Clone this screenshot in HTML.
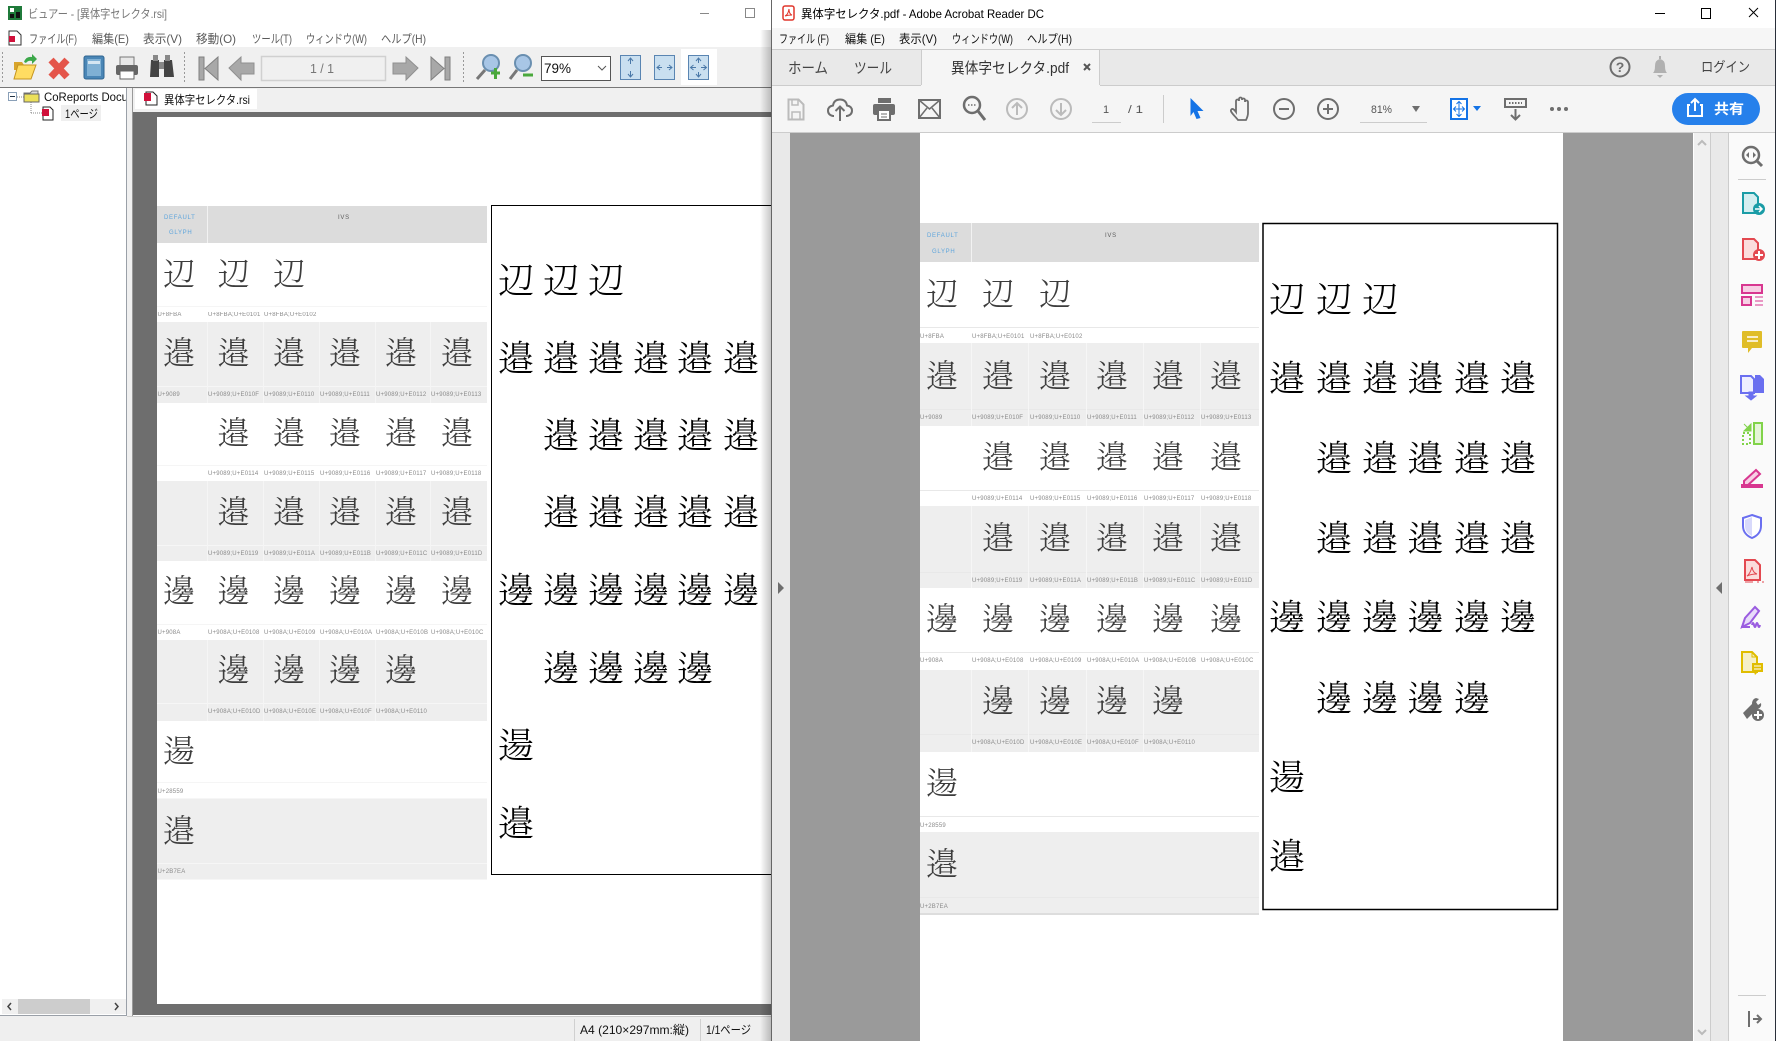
<!DOCTYPE html>
<html lang="ja"><head><meta charset="utf-8"><title>異体字セレクタ</title>
<style>
html,body{margin:0;padding:0;width:1776px;height:1041px;overflow:hidden;background:#fff}
svg{display:block;position:absolute;left:0;top:0}
text{font-family:"Liberation Sans","Noto Sans CJK JP",sans-serif;white-space:pre}
.g{font-family:"Noto Serif CJK JP","Liberation Serif",serif;font-size:32px;font-weight:300;fill:#3c3c3c}
.gl{filter:blur(.3px)}
.gr{font-family:"Noto Serif CJK JP","Liberation Serif",serif;font-size:36px;font-weight:300;fill:#000}
.l{font-size:6px;fill:#8a8a8a;letter-spacing:.2px}
.h{font-size:6px;letter-spacing:.7px;fill:#5c5c5c}
.m{font-size:12px;fill:#5a5a5a}
.k{font-size:12px;fill:#111}
.a{font-size:14px;fill:#444}
</style></head><body>
<svg width="1776" height="1041" viewBox="0 0 1776 1041" xmlns="http://www.w3.org/2000/svg">
<defs><linearGradient id="sh" x1="0" x2="1" y1="0" y2="0"><stop offset="0" stop-color="#000" stop-opacity="0"/><stop offset="1" stop-color="#000" stop-opacity=".22"/></linearGradient></defs>

<!-- LEFT WINDOW -->
<rect width="772" height="1041" fill="#fff"/>
<rect y="47" width="772" height="41" fill="#f0f0f0"/>
<!-- title -->
<g><rect x="8" y="6" width="14" height="14" fill="#1f7a3a"/><rect x="10" y="8" width="4" height="4" fill="#fff"/><rect x="16" y="12" width="4" height="6" fill="#111"/><rect x="10" y="14" width="4" height="4" fill="#111"/></g>
<text class="m" x="28" y="18" textLength="139" lengthAdjust="spacingAndGlyphs" style="fill:#777">ビュアー - [異体字セレクタ.rsi]</text>
<rect x="700" y="13" width="9" height="1" fill="#888"/><rect x="745.500" y="8.500" width="9" height="9" fill="none" stroke="#888"/>
<!-- menu -->
<path d="M9 31h8l4 4v10H9z" fill="#fff" stroke="#333"/><rect x="9" y="36" width="6" height="6" fill="#d0103a"/>
<text class="m" x="29" y="43" textLength="48" lengthAdjust="spacingAndGlyphs">ファイル(F)</text>
<text class="m" x="92" y="43" textLength="37" lengthAdjust="spacingAndGlyphs">編集(E)</text>
<text class="m" x="143" y="43" textLength="39" lengthAdjust="spacingAndGlyphs">表示(V)</text>
<text class="m" x="196" y="43" textLength="40" lengthAdjust="spacingAndGlyphs">移動(O)</text>
<text class="m" x="252" y="43" textLength="40" lengthAdjust="spacingAndGlyphs">ツール(T)</text>
<text class="m" x="306" y="43" textLength="61" lengthAdjust="spacingAndGlyphs">ウィンドウ(W)</text>
<text class="m" x="381" y="43" textLength="45" lengthAdjust="spacingAndGlyphs">ヘルプ(H)</text>
<!-- toolbar -->
<path d="M2.500 52v31" stroke="#999" stroke-dasharray="2 2"/><path d="M184.500 52v31" stroke="#999" stroke-dasharray="2 2"/><path d="M463.500 52v31" stroke="#999" stroke-dasharray="2 2"/>
<path d="M14 62h8l2 3h7v5H14z" fill="#d9a52c"/><path d="M14 79l4-14h18l-5 14z" fill="#ffdc62" stroke="#c49420"/><path d="M24 62q2-6 8-5v-3l5 5-5 5v-3q-4-1-6 2z" fill="#3ca84a"/>
<path d="M51 60l16 17M67 60l-16 17" stroke="#e4554a" stroke-width="7"/>
<rect x="84" y="56" width="20" height="23" rx="2" fill="#4a86b6" stroke="#2f6591"/><rect x="87" y="59" width="14" height="17" fill="#7fb0d4"/><rect x="88" y="61" width="12" height="3" fill="#d5e6f2"/>
<path d="M120 57h14v9h-14z" fill="#e8e8e8" stroke="#777"/><rect x="116" y="65" width="22" height="10" rx="2" fill="#666"/><rect x="120" y="71" width="14" height="8" fill="#fff" stroke="#666"/>
<path d="M151 60h8v17h-9zM164 60h8l2 17h-10z" fill="#444"/><rect x="153" y="55" width="5" height="6" fill="#888"/><rect x="165" y="55" width="5" height="6" fill="#888"/><rect x="159" y="62" width="5" height="7" fill="#888"/>
<path d="M199 57h5v23h-5zM218 57v23l-13-11.500z" fill="#a8a8a8" stroke="#808080"/>
<path d="M229 68l12-11v6h13v11h-13v6z" fill="#a8a8a8" stroke="#909090"/>
<rect x="261.500" y="56.500" width="124" height="24" fill="#f0f0f0" stroke="#d0d0d0" stroke-width="1.500"/>
<text class="m" x="310" y="73" textLength="24" lengthAdjust="spacingAndGlyphs" style="font-size:13px;fill:#777">1 / 1</text>
<path d="M418 68l-12-11v6h-13v11h13v6z" fill="#a8a8a8" stroke="#909090"/>
<path d="M445 57h5v23h-5zM431 57v23l13-11.500z" fill="#a8a8a8" stroke="#808080"/>
<circle cx="491" cy="63" r="8" fill="#a8c6e6" stroke="#6a8fb0" stroke-width="2"/><path d="M485 70l-8 9" stroke="#777" stroke-width="3"/><path d="M491 73h9M495.500 68v11" stroke="#4aa83c" stroke-width="3"/>
<circle cx="523" cy="63" r="8" fill="#a8c6e6" stroke="#6a8fb0" stroke-width="2"/><path d="M517 70l-7 9" stroke="#777" stroke-width="3"/><path d="M523 75h10" stroke="#4aa83c" stroke-width="3"/>
<rect x="541.500" y="56.500" width="69" height="24" fill="#fff" stroke="#555"/>
<text class="k" x="544" y="73" textLength="27" lengthAdjust="spacingAndGlyphs" style="font-size:14px">79%</text>
<path d="M598 66l4 4 4-4" fill="none" stroke="#555"/>
<rect x="681" y="49" width="36" height="36" fill="#fff"/>
<g fill="#c9dff0" stroke="#5a85b2"><rect x="620.500" y="55.500" width="20" height="24"/><rect x="654.500" y="55.500" width="20" height="24"/><rect x="688.500" y="55.500" width="20" height="24"/></g>
<g fill="none" stroke="#4a78a8"><path d="M630.500 58v6M628 61l2.500-3 2.500 3M630.500 77v-6M628 74l2.500 3 2.500-3M657 67.500h5M660 65l-3 2.500 3 2.500M672 67.500h-5M669 65l3 2.500-3 2.500M698.500 58v5M696 61l2.500-3 2.500 3M698.500 77v-5M696 74l2.500 3 2.500-3M691 67.500h5M693.500 65l-3 2.500 3 2.500M706 67.500h-5M703.500 65l3 2.500-3 2.500"/></g>
<rect y="87" width="772" height="1" fill="#777"/>

<!-- tree panel -->
<rect y="88" width="127" height="928" fill="#fff"/><rect x="126" y="88" width="1" height="928" fill="#9aa0a8"/><rect y="1015" width="127" height="1" fill="#9aa0a8"/>
<rect x="8.500" y="92.500" width="8" height="8" fill="#fff" stroke="#8aa0b8"/><path d="M10 96.500h5" stroke="#234"/>
<path d="M17 97h7M31 102v11M31 113h11" stroke="#888" stroke-dasharray="1 1" fill="none"/>
<path d="M24 93h6l2-2h6v3h-14z" fill="#ddd" stroke="#777"/><path d="M24 94h15v8h-15z" fill="#ece05a" stroke="#666"/>
<path d="M43 107h7l3 3v10H43z" fill="#fff" stroke="#222"/><rect x="42" y="109" width="7" height="7" fill="#d0103a"/>
<text class="k" x="44" y="101" textLength="84" lengthAdjust="spacingAndGlyphs">CoReports Docu</text>
<rect x="127" y="88" width="5" height="928" fill="#f0f0f0"/><rect x="126" y="88" width="1" height="928" fill="#9aa0a8"/>
<rect x="61" y="105" width="40" height="16" fill="#efefef"/>
<text class="k" x="65" y="118" textLength="33" lengthAdjust="spacingAndGlyphs">1ページ</text>
<rect x="2" y="999" width="124" height="15" fill="#f0f0f0"/><rect x="18" y="999" width="72" height="15" fill="#cdcdcd"/>
<path d="M11 1003l-3 3.500 3 3.500M115 1003l3 3.500-3 3.500" fill="none" stroke="#444" stroke-width="1.500"/>

<!-- tab strip -->
<rect x="132" y="88" width="640" height="24" fill="#f0f0f0"/>
<rect x="132" y="88" width="1" height="928" fill="#999"/>
<rect x="135" y="89" width="122" height="20" fill="#fff"/>
<path d="M146 92h7l4 4v9H146z" fill="#fff" stroke="#222"/><rect x="144" y="93" width="7" height="8" fill="#d0103a"/>
<text class="k" x="164" y="104" textLength="86" lengthAdjust="spacingAndGlyphs">異体字セレクタ.rsi</text>

<!-- left doc area -->
<rect x="133" y="112" width="639" height="903" fill="#6e6e6e"/>
<rect x="157" y="117" width="615" height="887" fill="#fff"/>

<!-- left grid -->
<rect x="157" y="206" width="330" height="37" fill="#dcdcdc"/><rect x="207" y="206" width="1" height="37" fill="#f2f2f2"/>
<g fill="#eee"><rect x="157" y="322" width="330" height="81"/><rect x="157" y="481" width="330" height="80"/><rect x="157" y="640" width="330" height="81"/><rect x="157" y="798.500" width="330" height="81"/></g>
<g fill="#f5f5f5"><rect x="157" y="306" width="330" height="1"/><rect x="157" y="465" width="330" height="1"/><rect x="157" y="624" width="330" height="1"/><rect x="157" y="782" width="330" height="1"/></g>
<g fill="#f6f6f6"><rect x="157" y="386" width="330" height="1"/><rect x="157" y="545" width="330" height="1"/><rect x="157" y="703" width="330" height="1"/><rect x="157" y="863" width="330" height="1"/></g>
<g fill="#f5f5f5"><rect x="207" y="322" width="1" height="81"/><rect x="263" y="322" width="1" height="81"/><rect x="319" y="322" width="1" height="81"/><rect x="375" y="322" width="1" height="81"/><rect x="430" y="322" width="1" height="81"/>
<rect x="207" y="481" width="1" height="80"/><rect x="263" y="481" width="1" height="80"/><rect x="319" y="481" width="1" height="80"/><rect x="375" y="481" width="1" height="80"/><rect x="430" y="481" width="1" height="80"/>
<rect x="207" y="640" width="1" height="81"/><rect x="263" y="640" width="1" height="81"/><rect x="319" y="640" width="1" height="81"/><rect x="375" y="640" width="1" height="81"/></g>
<text class="h" x="164" y="219" style="fill:#5ea5dc">DEFAULT</text><text class="h" x="169" y="234" style="fill:#5ea5dc">GLYPH</text><text class="h" x="338" y="219">IVS</text>
<g class="gl">
<text class="g" x="163 217.500 273" y="285">辺辺辺</text>
<text class="g" x="163 217.500 273 329 385 441" y="364">邉邉邉邉邉邉</text>
<text class="g" x="217.500 273 329 385 441" y="444">邉邉邉邉邉</text>
<text class="g" x="217.500 273 329 385 441" y="523">邉邉邉邉邉</text>
<text class="g" x="163 217.500 273 329 385 441" y="602">邊邊邊邊邊邊</text>
<text class="g" x="217.500 273 329 385" y="681">邊邊邊邊</text>
<text class="g" x="163" y="762">逿</text>
<text class="g" x="163" y="842">邉</text>
</g>
<g class="gl">
<text class="l" x="157.500" y="316">U+8FBA</text><text class="l" x="208" y="316">U+8FBA;U+E0101</text><text class="l" x="264" y="316">U+8FBA;U+E0102</text>
<text class="l" x="157.500" y="396">U+9089</text><text class="l" x="208" y="396">U+9089;U+E010F</text><text class="l" x="264" y="396">U+9089;U+E0110</text><text class="l" x="320" y="396">U+9089;U+E0111</text><text class="l" x="376" y="396">U+9089;U+E0112</text><text class="l" x="431" y="396">U+9089;U+E0113</text>
<text class="l" x="208" y="475">U+9089;U+E0114</text><text class="l" x="264" y="475">U+9089;U+E0115</text><text class="l" x="320" y="475">U+9089;U+E0116</text><text class="l" x="376" y="475">U+9089;U+E0117</text><text class="l" x="431" y="475">U+9089;U+E0118</text>
<text class="l" x="208" y="555">U+9089;U+E0119</text><text class="l" x="264" y="555">U+9089;U+E011A</text><text class="l" x="320" y="555">U+9089;U+E011B</text><text class="l" x="376" y="555">U+9089;U+E011C</text><text class="l" x="431" y="555">U+9089;U+E011D</text>
<text class="l" x="157.500" y="634">U+908A</text><text class="l" x="208" y="634">U+908A;U+E0108</text><text class="l" x="264" y="634">U+908A;U+E0109</text><text class="l" x="320" y="634">U+908A;U+E010A</text><text class="l" x="376" y="634">U+908A;U+E010B</text><text class="l" x="431" y="634">U+908A;U+E010C</text>
<text class="l" x="208" y="713">U+908A;U+E010D</text><text class="l" x="264" y="713">U+908A;U+E010E</text><text class="l" x="320" y="713">U+908A;U+E010F</text><text class="l" x="376" y="713">U+908A;U+E0110</text>
<text class="l" x="157.500" y="793">U+28559</text><text class="l" x="157.500" y="873">U+2B7EA</text>
</g>
<!-- left box -->
<rect x="491.500" y="205.500" width="400" height="669" fill="#fff" stroke="#000"/>
<text class="gr" x="498 543 588" y="293">辺辺辺</text>
<text class="gr" x="498 543 588 633 677 723" y="371">邉邉邉邉邉邉</text>
<text class="gr" x="543 588 633 677 723" y="448">邉邉邉邉邉</text>
<text class="gr" x="543 588 633 677 723" y="525">邉邉邉邉邉</text>
<text class="gr" x="498 543 588 633 677 723" y="603">邊邊邊邊邊邊</text>
<text class="gr" x="543 588 633 677" y="681">邊邊邊邊</text>
<text class="gr" x="498" y="758">逿</text>
<text class="gr" x="498" y="836">邉</text>

<!-- status -->
<rect y="1016" width="772" height="25" fill="#efefef"/><rect x="127" y="1016" width="645" height="1" fill="#ccc"/>
<rect x="574" y="1019" width="1" height="22" fill="#d0d0d0"/><rect x="700" y="1019" width="1" height="22" fill="#d0d0d0"/>
<text class="k" x="580" y="1034" textLength="109" lengthAdjust="spacingAndGlyphs">A4 (210×297mm:縦)</text>
<text class="k" x="706" y="1034" textLength="45" lengthAdjust="spacingAndGlyphs">1/1ページ</text>

<rect x="760" y="30" width="11" height="1011" fill="url(#sh)"/>

<!-- RIGHT WINDOW -->
<rect x="771" width="1" height="1041" fill="#666"/>
<rect x="772" width="1004" height="1041" fill="#fff"/>
<rect x="772" y="28" width="1004" height="21" fill="#f6f6f6"/>
<rect x="772" y="49" width="1004" height="36" fill="#e9e9e9"/><rect x="772" y="49" width="1004" height="1" fill="#ccc"/>
<rect x="921" y="50" width="179" height="36" fill="#f5f5f5"/><rect x="921" y="50" width="1" height="35" fill="#ccc"/><rect x="1099" y="50" width="1" height="35" fill="#ccc"/>
<rect x="772" y="85" width="149" height="1" fill="#ccc"/><rect x="1100" y="85" width="676" height="1" fill="#ccc"/>
<rect x="772" y="86" width="1004" height="46" fill="#f5f5f5"/><rect x="772" y="132" width="1004" height="1" fill="#ccc"/>
<!-- title -->
<rect x="783" y="6" width="11" height="14" rx="2" fill="#fff" stroke="#e0372c" stroke-width="1.500"/><path d="M785 16q3-1 4-7 0 5 3 6-4 0-7 1z" fill="none" stroke="#e0372c"/>
<text class="k" x="801" y="18" textLength="243" lengthAdjust="spacingAndGlyphs" style="fill:#000">異体字セレクタ.pdf - Adobe Acrobat Reader DC</text>
<rect x="1655" y="13" width="10" height="1" fill="#000"/><rect x="1701.500" y="8.500" width="9" height="10" fill="none" stroke="#000"/><path d="M1749 8l9 9M1758 8l-9 9" stroke="#000"/>
<!-- menu -->
<text class="k" x="779" y="43" textLength="50" lengthAdjust="spacingAndGlyphs">ファイル (F)</text>
<text class="k" x="845" y="43" textLength="40" lengthAdjust="spacingAndGlyphs">編集 (E)</text>
<text class="k" x="899" y="43" textLength="38" lengthAdjust="spacingAndGlyphs">表示(V)</text>
<text class="k" x="952" y="43" textLength="61" lengthAdjust="spacingAndGlyphs">ウィンドウ(W)</text>
<text class="k" x="1027" y="43" textLength="45" lengthAdjust="spacingAndGlyphs">ヘルプ(H)</text>
<!-- tabs -->
<text class="a" x="788" y="73" textLength="40" lengthAdjust="spacingAndGlyphs" style="font-size:15px">ホーム</text>
<text class="a" x="854" y="73" textLength="38" lengthAdjust="spacingAndGlyphs" style="font-size:15px">ツール</text>
<text class="a" x="951" y="73" textLength="118" lengthAdjust="spacingAndGlyphs" style="font-size:15px;fill:#333">異体字セレクタ.pdf</text>
<path d="M1084 64l6 6M1090 64l-6 6" stroke="#555" stroke-width="2"/>
<circle cx="1620" cy="67" r="9.500" fill="none" stroke="#6e6e6e" stroke-width="2"/><text x="1620" y="72" text-anchor="middle" style="font-size:14px;font-weight:bold;fill:#6e6e6e">?</text>
<path d="M1653 73q2-2 2-7 0-6 5-7 5 1 5 7 0 5 2 7z" fill="#b0b0b0"/><rect x="1659" y="56" width="2" height="3" fill="#b0b0b0"/><path d="M1657 75h6l-3 3z" fill="#b0b0b0"/>
<text class="a" x="1701" y="72" textLength="49" lengthAdjust="spacingAndGlyphs" style="font-size:14px">ログイン</text>
<!-- acrobat toolbar -->
<path d="M788.500 99.500h10l5 5v15h-15z" fill="none" stroke="#bbb" stroke-width="2"/><path d="M792 99v6h6v-6M792 119v-7h8v7" fill="none" stroke="#bbb" stroke-width="1.500"/>
<path d="M834 116h-1q-5-1-5-5.500 0-4 5-5 1-6 7-6 6 0 7 6 5 1 5 5 0 4.500-5 5.500h-1" fill="none" stroke="#6e6e6e" stroke-width="2"/><path d="M840 121v-14M835.500 111l4.500-4.500 4.500 4.500" fill="none" stroke="#6e6e6e" stroke-width="2"/>
<rect x="878" y="98" width="13" height="5" fill="#6e6e6e"/><rect x="873" y="104" width="22" height="11" rx="2" fill="#6e6e6e"/><rect x="878" y="110" width="12" height="10" fill="#fff" stroke="#6e6e6e" stroke-width="2"/><path d="M881 114h6M881 117h6" stroke="#6e6e6e"/>
<rect x="919" y="100" width="21" height="18" fill="none" stroke="#6e6e6e" stroke-width="2"/><path d="M919 100l10.500 9 10.500-9M919 118l8-10M940 118l-8-10" fill="none" stroke="#6e6e6e" stroke-width="1.500"/>
<circle cx="972" cy="105" r="8" fill="none" stroke="#6e6e6e" stroke-width="2.500"/><path d="M978 111l7 9" stroke="#6e6e6e" stroke-width="3"/><path d="M968 105h1.500M971 105h1.500M974 105h1.500" stroke="#6e6e6e" stroke-width="1.500"/>
<g fill="none" stroke="#bbb" stroke-width="2"><circle cx="1017" cy="109" r="10"/><path d="M1017 115v-12M1012 108l5-5 5 5"/><circle cx="1061" cy="109" r="10"/><path d="M1061 103v12M1056 110l5 5 5-5"/></g>
<text x="1106" y="113" text-anchor="middle" style="font-size:11px;fill:#555">1</text><rect x="1092" y="122" width="29" height="1" fill="#ccc"/>
<text x="1128" y="113" textLength="15" lengthAdjust="spacingAndGlyphs" style="font-size:11px;fill:#555">/ 1</text>
<rect x="1163" y="95" width="1" height="28" fill="#ccc"/>
<path d="M1190.500 98l13 13h-6l3 7-4 1-3-7-3 4z" fill="#1473e6"/>
<path d="M1238 120c-3-4-8-8-7-10 1-2 3-1 5 2v-11c0-2 3-2 3 0v-2c0-2 3-2 3 0v1c0-2 3-2 3 0v2c0-2 3-2 3 0v11c0 3-1 5-2 7z" fill="none" stroke="#6e6e6e" stroke-width="1.800"/>
<g fill="none" stroke="#6e6e6e" stroke-width="2"><circle cx="1284" cy="109" r="10"/><path d="M1279 109h10"/><circle cx="1328" cy="109" r="10"/><path d="M1323 109h10M1328 104v10"/></g>
<text x="1371" y="113" textLength="21" lengthAdjust="spacingAndGlyphs" style="font-size:11px;fill:#555">81%</text><path d="M1412 106h8l-4 6z" fill="#6e6e6e"/><rect x="1360" y="122" width="67" height="1" fill="#ccc"/>
<rect x="1451" y="99" width="16" height="20" fill="#fff" stroke="#1473e6" stroke-width="2"/><path d="M1459 102v14M1456.500 104l2.500-2.500 2.500 2.500M1456.500 114l2.500 2.500 2.500-2.500M1454 109h10M1456 106.500l-2.500 2.500 2.500 2.500M1462 106.500l2.500 2.500-2.500 2.500" fill="none" stroke="#1473e6"/><path d="M1473 106h8l-4 5z" fill="#1473e6"/>
<rect x="1505" y="99" width="21" height="8" fill="none" stroke="#6e6e6e" stroke-width="2"/><path d="M1509 103h13" stroke="#6e6e6e" stroke-dasharray="1.500 1.500" stroke-width="2"/><path d="M1515.500 109v10M1511 115l4.500 4.500 4.500-4.500" fill="none" stroke="#6e6e6e" stroke-width="2"/>
<g fill="#6e6e6e"><circle cx="1552" cy="109" r="2"/><circle cx="1559" cy="109" r="2"/><circle cx="1566" cy="109" r="2"/></g>
<rect x="1672" y="93" width="88" height="32" rx="16" fill="#2680eb"/>
<path d="M1690 105h-2v11h14v-11h-2M1695 111v-11M1691 103l4-4 4 4" fill="none" stroke="#fff" stroke-width="2"/>
<text x="1714" y="114" textLength="30" lengthAdjust="spacingAndGlyphs" style="font-size:14px;font-weight:bold;fill:#fff">共有</text>

<!-- doc area -->
<rect x="772" y="133" width="18" height="908" fill="#e9e9e9"/>
<path d="M778 582v12l6-6z" fill="#6e6e6e"/>
<rect x="790" y="133" width="903" height="908" fill="#9a9a9a"/>
<rect x="920" y="133" width="643" height="908" fill="#fff"/>
<rect x="1693" y="133" width="1" height="908" fill="#fff"/>
<rect x="1694" y="133" width="16" height="908" fill="#f0f0f0"/><rect x="1710" y="133" width="1" height="908" fill="#ccc"/>
<path d="M1698 145l4-4 4 4M1698 1030l4 4 4-4" fill="none" stroke="#bbb" stroke-width="2"/>
<rect x="1711" y="133" width="17" height="908" fill="#e9e9e9"/><rect x="1728" y="133" width="1" height="908" fill="#ccc"/>
<path d="M1722 582v12l-6-6z" fill="#6e6e6e"/>
<rect x="1729" y="133" width="46" height="908" fill="#fafafa"/><rect x="1775" width="1" height="1041" fill="#2a2f3a"/>

<!-- right grid -->
<rect x="920" y="223" width="339" height="39" fill="#dcdcdc"/><rect x="971" y="223" width="1" height="39" fill="#f2f2f2"/>
<g fill="#eee"><rect x="920" y="343" width="339" height="83"/><rect x="920" y="506" width="339" height="82"/><rect x="920" y="670" width="339" height="82"/><rect x="920" y="832" width="339" height="81"/></g>
<rect x="920" y="913" width="339" height="2" fill="#ddd"/>
<g fill="#e8e8e8"><rect x="920" y="327" width="339" height="1"/><rect x="920" y="409" width="339" height="1"/><rect x="920" y="490" width="339" height="1"/><rect x="920" y="572" width="339" height="1"/><rect x="920" y="652" width="339" height="1"/><rect x="920" y="734" width="339" height="1"/><rect x="920" y="816" width="339" height="1"/><rect x="920" y="897" width="339" height="1"/></g>
<g fill="#f6f6f6"><rect x="971" y="343" width="1" height="83"/><rect x="1028" y="343" width="1" height="83"/><rect x="1086" y="343" width="1" height="83"/><rect x="1143" y="343" width="1" height="83"/><rect x="1200" y="343" width="1" height="83"/>
<rect x="971" y="506" width="1" height="82"/><rect x="1028" y="506" width="1" height="82"/><rect x="1086" y="506" width="1" height="82"/><rect x="1143" y="506" width="1" height="82"/><rect x="1200" y="506" width="1" height="82"/>
<rect x="971" y="670" width="1" height="82"/><rect x="1028" y="670" width="1" height="82"/><rect x="1086" y="670" width="1" height="82"/><rect x="1143" y="670" width="1" height="82"/></g>
<text class="h" x="927" y="237" style="fill:#5ea5dc">DEFAULT</text><text class="h" x="932" y="253" style="fill:#5ea5dc">GLYPH</text><text class="h" x="1105" y="237">IVS</text>
<text class="g" x="926 982 1039" y="305">辺辺辺</text>
<text class="g" x="926 982 1039 1096 1152 1210" y="387">邉邉邉邉邉邉</text>
<text class="g" x="982 1039 1096 1152 1210" y="468">邉邉邉邉邉</text>
<text class="g" x="982 1039 1096 1152 1210" y="549">邉邉邉邉邉</text>
<text class="g" x="926 982 1039 1096 1152 1210" y="630">邊邊邊邊邊邊</text>
<text class="g" x="982 1039 1096 1152" y="712">邊邊邊邊</text>
<text class="g" x="926" y="794">逿</text>
<text class="g" x="926" y="875">邉</text>
<g>
<text class="l" x="920" y="338">U+8FBA</text><text class="l" x="972" y="338">U+8FBA;U+E0101</text><text class="l" x="1030" y="338">U+8FBA;U+E0102</text>
<text class="l" x="920" y="419">U+9089</text><text class="l" x="972" y="419">U+9089;U+E010F</text><text class="l" x="1030" y="419">U+9089;U+E0110</text><text class="l" x="1087" y="419">U+9089;U+E0111</text><text class="l" x="1144" y="419">U+9089;U+E0112</text><text class="l" x="1201" y="419">U+9089;U+E0113</text>
<text class="l" x="972" y="500">U+9089;U+E0114</text><text class="l" x="1030" y="500">U+9089;U+E0115</text><text class="l" x="1087" y="500">U+9089;U+E0116</text><text class="l" x="1144" y="500">U+9089;U+E0117</text><text class="l" x="1201" y="500">U+9089;U+E0118</text>
<text class="l" x="972" y="582">U+9089;U+E0119</text><text class="l" x="1030" y="582">U+9089;U+E011A</text><text class="l" x="1087" y="582">U+9089;U+E011B</text><text class="l" x="1144" y="582">U+9089;U+E011C</text><text class="l" x="1201" y="582">U+9089;U+E011D</text>
<text class="l" x="920" y="662">U+908A</text><text class="l" x="972" y="662">U+908A;U+E0108</text><text class="l" x="1030" y="662">U+908A;U+E0109</text><text class="l" x="1087" y="662">U+908A;U+E010A</text><text class="l" x="1144" y="662">U+908A;U+E010B</text><text class="l" x="1201" y="662">U+908A;U+E010C</text>
<text class="l" x="972" y="744">U+908A;U+E010D</text><text class="l" x="1030" y="744">U+908A;U+E010E</text><text class="l" x="1087" y="744">U+908A;U+E010F</text><text class="l" x="1144" y="744">U+908A;U+E0110</text>
<text class="l" x="920" y="827">U+28559</text><text class="l" x="920" y="908">U+2B7EA</text>
</g>
<!-- right box -->
<rect x="1263" y="223.500" width="294.500" height="686" fill="#fff" stroke="#000" stroke-width="1.500"/>
<text class="gr" x="1269 1316 1362" y="312">辺辺辺</text>
<text class="gr" x="1269 1316 1362 1407.500 1454 1500" y="391">邉邉邉邉邉邉</text>
<text class="gr" x="1316 1362 1407.500 1454 1500" y="471">邉邉邉邉邉</text>
<text class="gr" x="1316 1362 1407.500 1454 1500" y="551">邉邉邉邉邉</text>
<text class="gr" x="1269 1316 1362 1407.500 1454 1500" y="630">邊邊邊邊邊邊</text>
<text class="gr" x="1316 1362 1407.500 1454" y="711">邊邊邊邊</text>
<text class="gr" x="1269" y="790">逿</text>
<text class="gr" x="1269" y="869">邉</text>

<!-- right side panel icons -->
<circle cx="1751" cy="155" r="8" fill="none" stroke="#6e6e6e" stroke-width="2.500"/><path d="M1757 161l5 5" stroke="#6e6e6e" stroke-width="3"/><path d="M1749 152v6l-3-3zM1753 152v6l3-3z" fill="#6e6e6e"/>
<rect x="1738" y="179" width="28" height="1" fill="#ccc"/>
<path d="M1743 193h11l4 4v16h-15z" fill="#d4eef0" stroke="#1a9ca6" stroke-width="2"/><circle cx="1759" cy="209" r="6" fill="#1a9ca6"/><path d="M1755 209h7M1759 206l3 3-3 3" fill="none" stroke="#fff" stroke-width="1.500"/>
<path d="M1743 239h11l4 4v16h-15z" fill="#fbdcdc" stroke="#e34850" stroke-width="2"/><circle cx="1759" cy="255" r="6" fill="#e34850"/><path d="M1755 255h8M1759 251v8" stroke="#fff" stroke-width="2"/>
<rect x="1742" y="285" width="20" height="8" fill="#f7cfe4" stroke="#d83790" stroke-width="2"/><rect x="1742" y="297" width="9" height="8" fill="#f7cfe4" stroke="#d83790" stroke-width="2"/><path d="M1755 297h8M1755 301h8M1755 305h8" stroke="#d83790"/>
<path d="M1743 331h18a1 1 0 0 1 1 1v15a1 1 0 0 1-1 1h-9l-4 5v-5h-5a1 1 0 0 1-1-1v-15a1 1 0 0 1 1-1z" fill="#e0bd28"/><path d="M1747 337h11M1747 341h11" stroke="#fff" stroke-width="1.500"/>
<path d="M1741 376h10l3 3v14h-13z" fill="#eef" stroke="#6a6ff0" stroke-width="2"/><path d="M1755 375h5l4 4v14h-9z" fill="#6a6ff0"/><path d="M1749 392v4h-3l5 4 5-4h-3v-4z" fill="#6a6ff0" stroke="#6a6ff0"/>
<rect x="1754" y="423" width="8" height="21" fill="#e5f5d8" stroke="#81d34a" stroke-width="2"/><rect x="1743" y="433" width="7" height="11" fill="none" stroke="#81d34a" stroke-width="2" stroke-dasharray="2 2"/><path d="M1751 424v7h-7zM1744 424l4 4" fill="#81d34a" stroke="#81d34a"/>
<path d="M1744 481l12-11 4 4-12 11h-4z" fill="#f7cfe4" stroke="#d83790" stroke-width="2"/><rect x="1741" y="484" width="22" height="4" fill="#d83790"/>
<path d="M1752 515l9 3v8c0 6-4 10-9 12-5-2-9-6-9-12v-8z" fill="#fff" stroke="#6a6ff0" stroke-width="2"/><path d="M1752 517v19c-4-2-7-5-7-10v-6z" fill="#d8d9fb"/>
<path d="M1745 560h10l5 5v15h-15z" fill="#fbdcdc" stroke="#e34850" stroke-width="2"/><path d="M1747 576q3-2 5-9 1 6 5 7-6 0-10 2z" fill="none" stroke="#e34850"/><path d="M1745 582h8M1757 582h2M1762 582h2" stroke="#e34850"/>
<path d="M1742 627l3-9 10-11 4 4-9 12z" fill="#e8dcfa" stroke="#9a5ce0" stroke-width="2"/><path d="M1741 627h9M1752 625q1-4 2 0t2 0 2 0 2 0" fill="none" stroke="#9a5ce0" stroke-width="2"/>
<path d="M1742 652h10l5 5v15h-15z" fill="#f5f0c8" stroke="#e0bd00" stroke-width="2"/><path d="M1752 652v5h5" fill="none" stroke="#e0bd00"/><rect x="1752" y="663" width="11" height="9" fill="#e0bd00"/><path d="M1754 672h4l-3 3z" fill="#e0bd00"/><path d="M1754 666h7M1754 669h7" stroke="#fff"/>
<path d="M1743 713l9-9q0-5 4-6l3 1-3 3 2 3 3-2q1 4-3 6l-2 1-9 9z" fill="#6e6e6e"/><circle cx="1758" cy="715" r="6" fill="#6e6e6e"/><path d="M1754 715h8M1758 711v8" stroke="#fff" stroke-width="2"/>
<rect x="1738" y="995" width="28" height="1" fill="#ccc"/>
<rect x="1748" y="1011" width="2" height="16" fill="#6e6e6e"/><path d="M1753 1019h8M1757 1015l4 4-4 4" fill="none" stroke="#6e6e6e" stroke-width="2"/>
</svg>
</body></html>
